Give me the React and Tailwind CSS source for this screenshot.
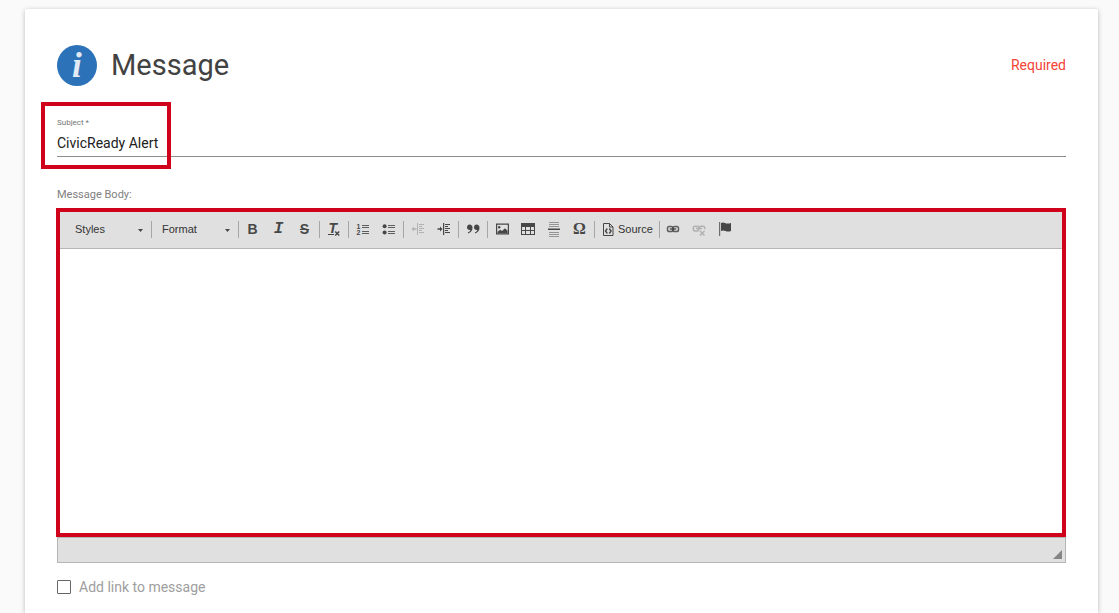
import { useState } from 'react';
import clsx from 'clsx';

function Icon({ children }) {
    return (
        <svg width="16" height="16" viewBox="0 0 16 16" fill="currentColor" className="overflow-visible" aria-hidden="true">
            {children}
        </svg>
    );
}

function LetterIcon({ char, className }) {
    return (
        <span aria-hidden="true" className={clsx('leading-5', className)}>
            {char}
        </span>
    );
}

const BoldIcon = () => <LetterIcon char="B" className="text-sm font-bold" />;

const ItalicIcon = () => (
    <LetterIcon char="I" className="font-['Liberation_Mono',monospace] text-base font-bold italic" />
);

const StrikeIcon = () => <LetterIcon char="S" className="text-sm font-bold line-through" />;

const RemoveFormatIcon = () => (
    <Icon>
        <text x="2.5" y="12" fontSize="14" fontWeight="700" fontStyle="italic" fontFamily="Liberation Sans, sans-serif">T</text>
        <path d="M2 13h6v1H2z" />
        <path d="M9.2 10.5l4 4M13.2 10.5l-4 4" stroke="currentColor" strokeWidth="1.4" />
    </Icon>
);

const NumberedListIcon = () => (
    <Icon>
        <text x="1.5" y="7.5" fontSize="7" fontWeight="700" fontFamily="Liberation Sans, sans-serif">1</text>
        <text x="1.5" y="14" fontSize="7" fontWeight="700" fontFamily="Liberation Sans, sans-serif">2</text>
        <path d="M7 4h7v1H7zM7 6h7v1H7zM7 10h7v1H7zM7 12h7v1H7z" opacity=".85" />
    </Icon>
);

const BulletedListIcon = () => (
    <Icon>
        <circle cx="3.6" cy="5.3" r="2" />
        <circle cx="3.6" cy="11.5" r="2" />
        <path d="M7 4h7v1H7zM7 6h7v1H7zM7 10h7v1H7zM7 12h7v1H7z" opacity=".85" />
    </Icon>
);

const OutdentIcon = () => (
    <Icon>
        <path d="M7 2h1v12H7zM9 3h5v1H9zM9 5h3v1H9zM9 7h5v1H9zM9 9h3v1H9zM9 11h5v1H9z" />
        <path d="M1.5 8L4 5.7v1.6h2.5v1.4H4v1.6z" />
    </Icon>
);

const IndentIcon = () => (
    <Icon>
        <path d="M7 2h1.2v12H7zM9 3h5v1H9zM9 5h3v1H9zM9 7h5v1H9zM9 9h3v1H9zM9 11h5v1H9z" />
        <path d="M6.5 8L4 5.5v1.8H1.5v1.4H4v1.8z" />
    </Icon>
);

const QuoteIcon = () => (
    <Icon>
        <path d="M4.6 3.6c1.8 0 2.9 1.3 2.9 3.1 0 2.7-1.6 4.9-4.3 5.7l-.4-1c1.4-.5 2.3-1.3 2.5-2.4-2 .3-3.3-.9-3.3-2.5s1.1-2.9 2.6-2.9z" />
        <path d="M11.6 3.6c1.8 0 2.9 1.3 2.9 3.1 0 2.7-1.6 4.9-4.3 5.7l-.4-1c1.4-.5 2.3-1.3 2.5-2.4-2 .3-3.3-.9-3.3-2.5s1.1-2.9 2.6-2.9z" />
    </Icon>
);

const ImageIcon = () => (
    <Icon>
        <path d="M2 2.5h13v11H2zM3.2 3.7v8.6h10.6V3.7z" fillRule="evenodd" />
        <circle cx="5.2" cy="6.2" r="1.2" />
        <path d="M3.6 12.3v-1.5l2.6-2.1 1.8 1.2L11 7.2l2.6 2.6v2.5z" />
    </Icon>
);

const TableIcon = () => (
    <Icon>
        <path d="M1 2h14v12H1zM2 6v3h3V6zM6 6v3h4V6zM11 6v3h3V6zM2 10v3h3v-3zM6 10v3h4v-3zM11 10v3h3v-3z" fillRule="evenodd" />
    </Icon>
);

const RuleIcon = () => (
    <Icon>
        <path d="M3 1h10v1H3zM3 3h10v1H3zM3 5h10v1H3zM3 11h10v1H3zM3 13h10v1H3zM3 15h10v1H3z" opacity=".5" />
        <path d="M2 7.5h12V9H2z" />
    </Icon>
);

const SpecialCharIcon = () => (
    <LetterIcon char="Ω" className="font-['Liberation_Serif',serif] text-base font-bold" />
);

const SourceIcon = () => (
    <Icon>
        <path d="M3.5 2.5h6l3.5 3.5v8.5H3.5zM9.5 2.5V6H13" fill="none" stroke="currentColor" />
        <path d="M7.3 7.5L5.5 10l1.8 2.5M9.3 7.5l1.8 2.5-1.8 2.5" fill="none" stroke="currentColor" strokeWidth="1.4" />
    </Icon>
);

const LinkIcon = () => (
    <Icon>
        <g fill="none" stroke="currentColor" strokeWidth="1.5">
            <rect x="2.5" y="5.5" width="5.4" height="5" rx="1.8" opacity=".85" />
            <rect x="8.1" y="5.5" width="5.4" height="5" rx="1.8" opacity=".85" />
            <path d="M4.8 8h6.4" strokeWidth="1.4" />
        </g>
    </Icon>
);

const UnlinkIcon = () => (
    <Icon>
        <g fill="none" stroke="currentColor" strokeWidth="1.5">
            <rect x="2.3" y="5.3" width="5.6" height="4.6" rx="1.8" />
            <path d="M8.3 8.3V6.7q.2-1.4 1.8-1.4h1.8q1.8 0 1.8 1.6v1.4M5 7.5h6" />
            <path d="M9 10l4.5 4.5M13.5 10L9 14.5" />
        </g>
    </Icon>
);

const AnchorIcon = () => (
    <Icon>
        <path d="M2 1h1.2v14H2z" opacity=".75" />
        <path d="M4 2q2-1 4 0t6 0v8q-3 1.2-5.5 0T4 10z" />
    </Icon>
);

const GROUPS = [
    [
        { label: 'Bold', icon: BoldIcon },
        { label: 'Italic', icon: ItalicIcon },
        { label: 'Strikethrough', icon: StrikeIcon }
    ],
    [{ label: 'Remove Format', icon: RemoveFormatIcon }],
    [
        { label: 'Insert/Remove Numbered List', icon: NumberedListIcon },
        { label: 'Insert/Remove Bulleted List', icon: BulletedListIcon }
    ],
    [
        { label: 'Decrease Indent', icon: OutdentIcon, disabled: true },
        { label: 'Increase Indent', icon: IndentIcon }
    ],
    [{ label: 'Block Quote', icon: QuoteIcon }],
    [
        { label: 'Image', icon: ImageIcon },
        { label: 'Table', icon: TableIcon },
        { label: 'Insert Horizontal Line', icon: RuleIcon },
        { label: 'Insert Special Character', icon: SpecialCharIcon }
    ],
    [{ label: 'Source', icon: SourceIcon, showLabel: true }],
    [
        { label: 'Link', icon: LinkIcon },
        { label: 'Unlink', icon: UnlinkIcon, disabled: true },
        { label: 'Anchor', icon: AnchorIcon }
    ]
];

function Separator() {
    return <span className="ml-0.5 mr-px h-[17px] w-px bg-[#a6a6a6]" />;
}

function Combo({ label }) {
    return (
        <div className="relative w-[83px]">
            <select
                aria-label={label}
                className="block h-6 w-full appearance-none bg-transparent pl-[9px] text-[11px] text-[#333] outline-none"
            >
                <option>{label}</option>
            </select>
            <svg className="pointer-events-none absolute right-1.5 top-3" width="5" height="3" viewBox="0 0 5 3" aria-hidden="true">
                <path d="M0 0h5L2.5 3z" fill="#474747" />
            </svg>
        </div>
    );
}

function ToolButton({ label, icon: Glyph, disabled, showLabel }) {
    return (
        <button
            type="button"
            aria-label={label}
            disabled={disabled}
            className={clsx(
                'flex h-6 items-center justify-center text-[#474747]',
                showLabel ? 'gap-0.5 px-1' : 'w-[25px]',
                disabled && 'opacity-30'
            )}
        >
            <Glyph />
            {showLabel && <span className="text-[11px] text-[#333]">{label}</span>}
        </button>
    );
}

function Toolbar() {
    return (
        <div className="flex h-[37px] items-center border-b border-[#b6b6b6] bg-[#e0e0e0] pb-0.5 pl-1.5 font-['Liberation_Sans',Arial,sans-serif]">
            <Combo label="Styles" />
            <Separator />
            <Combo label="Format" />
            {GROUPS.map((group) => (
                <div key={group[0].label} className="flex items-center">
                    <Separator />
                    <div className="flex gap-px">
                        {group.map((tool) => (
                            <ToolButton key={tool.label} {...tool} />
                        ))}
                    </div>
                </div>
            ))}
        </div>
    );
}

export default function App() {
    const [subject, setSubject] = useState('CivicReady Alert');
    const [body, setBody] = useState('');
    const [addLink, setAddLink] = useState(false);

    return (
        <div className="flex min-h-screen bg-[#fafafa] pl-[25px] pr-[21px] pt-[9px] font-[Roboto,sans-serif]">
            <main className="min-w-0 flex-1 rounded-t-xs bg-white px-8 pt-9 shadow-[0_1px_5px_rgba(0,0,0,0.25)]">
                <header className="flex items-start justify-between">
                    <div className="flex items-start gap-3.5">
                        <svg width="40" height="41" viewBox="0 0 40 41" aria-hidden="true">
                            <ellipse cx="20" cy="20.5" rx="20" ry="20.5" fill="#2b72b9" />
                            <text x="15" y="32" fontSize="35" fontWeight="700" fontStyle="italic" fontFamily="Liberation Serif, serif" fill="#e1eaf5">i</text>
                        </svg>
                        <h1 className="text-[29px] leading-10 text-[#424242]">Message</h1>
                    </div>
                    <span className="text-sm leading-10 text-[#f44336]">Required</span>
                </header>

                <div className="relative mt-[31px]">
                    <label htmlFor="subject" className="block text-[8px] leading-3 text-[#757575]">Subject *</label>
                    <input
                        id="subject"
                        value={subject}
                        onChange={(e) => setSubject(e.target.value)}
                        className="block h-7 w-full border-b border-[#8c8c8c] text-sm text-[#212121] outline-none"
                    />
                    <div className="pointer-events-none absolute -left-4 -top-[15px] h-[67px] w-[130px] border-4 border-[#d0021b]" />
                </div>

                <label htmlFor="body" className="mt-[30px] block text-[11px] leading-4 text-[#808080]">Message Body:</label>
                <div className="mt-[5px]">
                    <div className="-ml-px border-4 border-[#d0021b]">
                        <Toolbar />
                        <textarea
                            id="body"
                            value={body}
                            onChange={(e) => setBody(e.target.value)}
                            className="block h-[284px] w-full resize-none p-5 text-sm outline-none"
                        />
                    </div>
                    <div className="flex h-[26px] items-end justify-end border border-[#b6b6b6] bg-[#e0e0e0] p-[3px]">
                        <svg width="10" height="10" viewBox="0 0 10 10" aria-hidden="true">
                            <path d="M10 1v9H1z" fill="#858585" />
                        </svg>
                    </div>
                </div>

                <label className="mt-3.5 flex items-center gap-2 text-sm leading-5 text-[#9e9e9e]">
                    <input
                        type="checkbox"
                        checked={addLink}
                        onChange={(e) => setAddLink(e.target.checked)}
                        className="size-3.5 appearance-none rounded-[1px] border border-[#666] checked:bg-[#2b72b9]"
                    />
                    Add link to message
                </label>
            </main>
        </div>
    );
}
